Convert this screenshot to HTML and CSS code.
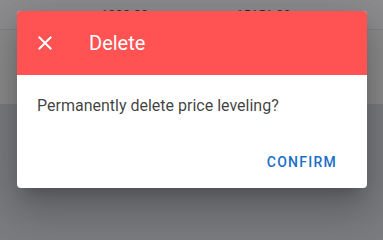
FILE: index.html
```html
<!DOCTYPE html>
<html lang="en">
<head>
<meta charset="utf-8">
<title>Delete</title>
<link rel="stylesheet" href="styles.css">
</head>
<body>
<div class="page">
  <div class="row row-head">
    <span class="cell cell-a">1000.00</span>
    <span class="cell cell-b">15151.00</span>
  </div>
  <div class="row row-mid"></div>
  <div class="rest"></div>
</div>
<div class="dialog" role="dialog">
  <div class="toolbar">
    <button class="icon-btn" aria-label="Close">
      <svg viewBox="0 0 24 24" width="24" height="24"><path fill="#fff" d="M19,6.41L17.59,5L12,10.59L6.41,5L5,6.41L10.59,12L5,17.59L6.41,19L12,13.41L17.59,19L19,17.59L13.41,12L19,6.41Z"/></svg>
    </button>
    <div class="title">Delete</div>
  </div>
  <div class="text">Permanently delete price leveling?</div>
  <div class="actions">
    <button class="btn">Confirm</button>
  </div>
</div>
</body>
</html>
```
FILE: styles.css
```css
html, body {
  margin: 0;
  padding: 0;
  height: 100%;
}
body {
  font-family: Roboto, "Noto Sans", Arial, sans-serif;
  background: #7b7c80;
  overflow: hidden;
}
.page {
  display: flex;
  flex-direction: column;
  height: 100%;
}
.row-head {
  height: 30px;
  background: #8d8d90;
  border-bottom: 1px solid #808083;
  box-sizing: border-box;
  display: flex;
  align-items: flex-start;
  padding-top: 7px;
  font-size: 13px;
  color: #2b2b2d;
}
.cell-a { margin-left: 101px; }
.cell-b { margin-left: 88px; }
.row-mid {
  height: 74px;
  background: #8b8b8c;
}
.rest {
  flex: 1;
  background: #7b7c80;
}
.dialog {
  position: absolute;
  left: 17px;
  top: 11px;
  width: 350px;
  height: 177px;
  background: #fff;
  border-radius: 4px;
  overflow: hidden;
  display: flex;
  flex-direction: column;
  box-shadow: 0 11px 15px -7px rgba(0,0,0,.2), 0 24px 38px 3px rgba(0,0,0,.14), 0 9px 46px 8px rgba(0,0,0,.12);
}
.toolbar {
  height: 64px;
  background: #ff5252;
  display: flex;
  align-items: center;
  padding: 0 16px;
  flex-shrink: 0;
}
.icon-btn {
  width: 48px;
  height: 48px;
  margin-left: -12px;
  border: 0;
  background: transparent;
  padding: 0;
  display: flex;
  align-items: center;
  justify-content: center;
}
.title {
  margin-left: 20px;
  color: #fff;
  font-size: 20px;
  line-height: 1.5;
}
.text {
  padding: 19px 20px 0;
  font-size: 16px;
  line-height: 24px;
  color: rgba(0,0,0,.76);
}
.actions {
  margin-top: auto;
  display: flex;
  justify-content: flex-end;
  padding: 8px 14px 8px 8px;
}
.btn {
  height: 36px;
  padding: 0 16px;
  border: 0;
  background: transparent;
  font-family: Roboto, "Noto Sans", Arial, sans-serif;
  font-size: 14px;
  font-weight: 500;
  letter-spacing: 1.25px;
  text-transform: uppercase;
  color: #1a6fc9;
}
```
